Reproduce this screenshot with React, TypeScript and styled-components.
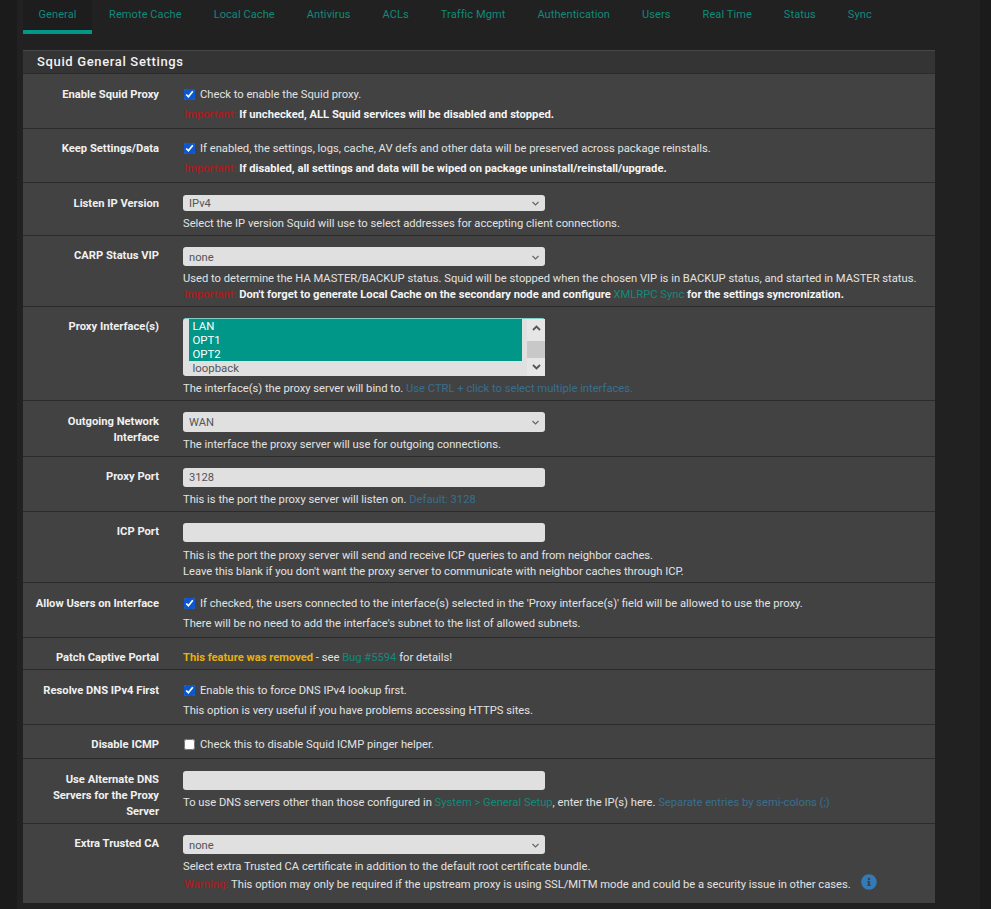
import React from 'react'
import styled, { createGlobalStyle } from 'styled-components'
import { FaInfoCircle } from 'react-icons/fa'

const GlobalStyle = createGlobalStyle`
  html, body {
    margin: 0;
    padding: 0;
    background: #1b1b1b;
    font-family: Roboto, "Liberation Sans", sans-serif;
  }
`

const Page = styled.div`
  width: 963px;
  height: 909px;
  margin-left: 17px;
  padding-left: 6px;
  box-sizing: border-box;
  background: #212121;
  overflow: hidden;
`

const Tabs = styled.ul`
  display: flex;
  gap: 2px;
  height: 34px;
  margin: 0;
  padding: 0;
  list-style: none;
`

const Tab = styled.li<{ $active?: boolean }>`
  height: 30px;
  padding: 0 ${props => props.$active ? '15.5px' : '15px'};
  font-size: 11px;
  line-height: 29px;
  color: #108a7a;
  letter-spacing: 0.09px;
  background: ${props => props.$active ? '#1d1d1d' : 'transparent'};
  border-bottom: 4px solid ${props => props.$active ? '#009688' : 'transparent'};
`

const Panel = styled.section`
  width: 912px;
  margin-top: 16px;
  background: #424242;
`

const Heading = styled.h2`
  margin: 0;
  height: 22px;
  padding-left: 14px;
  font-size: 13px;
  font-weight: 500;
  line-height: 22px;
  letter-spacing: 0.65px;
  color: #f2f2f2;
  background: #343434;
  border-top: 1px solid #484848;
`

const Row = styled.div<{ $pt: number, $pb: number }>`
  display: grid;
  grid-template-columns: 136px 1fr;
  column-gap: 24px;
  padding: ${props => props.$pt}px 0 ${props => props.$pb}px;
  border-top: 1px solid #2b2b2b;
`

const Label = styled.div<{ $offset?: number }>`
  margin-top: ${props => props.$offset ?? 1}px;
  padding-left: 9px;
  font-size: 11.2px;
  font-weight: 700;
  line-height: 16px;
  text-align: right;
  color: #f0f0f0;
`

const Content = styled.div`
  min-width: 0;
`

const Line = styled.div<{ $height?: number, $mt?: number }>`
  display: flex;
  align-items: center;
  height: ${props => props.$height || 16}px;
  margin-top: ${props => props.$mt || 0}px;
  font-size: 11.2px;
  white-space: pre;
  color: #e2e2e2;
`

const Check = styled.input.attrs({ type: 'checkbox', readOnly: true })`
  width: 11px;
  height: 11px;
  margin: 0 5px 0 1px;
  accent-color: #0b57d0;
`

const Strong = styled.strong`
  font-weight: 700;
  color: #f4f4f4;
`

const Danger = styled.span`
  color: #a81e1e;
  font-weight: 500;
  margin-left: 1px;
`

const Notice = styled.strong`
  font-weight: 700;
  color: #e8b00f;
`

const Link = styled.a`
  color: #128a79;
`

const Hint = styled.span`
  color: #386f90;
`

const SelectWrap = styled.div`
  position: relative;
  width: 362px;
`

const Select = styled.select<{ $height: number }>`
  display: block;
  width: 100%;
  height: ${props => props.$height}px;
  padding: 1px 6px 0;
  box-sizing: border-box;
  border: 0;
  border-radius: 3px;
  appearance: none;
  font-family: inherit;
  font-size: 11.2px;
  color: #555;
  background: #e0e0e0;
`

const Chevron = styled.svg`
  position: absolute;
  top: 50%;
  right: 6px;
  width: 7px;
  height: 5px;
  margin-top: -2px;
  fill: none;
  stroke: #666;
  stroke-width: 1.2;
  pointer-events: none;
`

const ListBox = styled.div`
  display: flex;
  width: 362px;
  height: 58px;
  box-sizing: border-box;
  padding-left: 6px;
  border-top: 1px solid #7fcfc5;
  border-radius: 3px;
  background: #e0e0e0;
`

const Options = styled.div`
  width: 333px;
  margin-right: 5px;
`

const Option = styled.div<{ $selected?: boolean }>`
  height: 14px;
  padding-left: 3.5px;
  font-size: 11.4px;
  line-height: 14px;
  color: ${props => props.$selected ? '#fff' : '#555'};
  background: ${props => props.$selected ? '#009688' : 'transparent'};
`

const Scrollbar = styled.div`
  display: flex;
  flex-direction: column;
  width: 18px;
`

const ScrollButton = styled.div<{ $height: number, $pb?: number }>`
  display: flex;
  align-items: center;
  justify-content: center;
  box-sizing: border-box;
  height: ${props => props.$height}px;
  padding-bottom: ${props => props.$pb || 0}px;
  background: #e6e6e6;
`

const ScrollThumb = styled.div`
  flex: 1;
  background: #c8c8c8;
`

const ScrollArrow = styled.svg`
  width: 9px;
  height: 6px;
  fill: none;
  stroke: #555;
  stroke-width: 1.8;
`

const TextInput = styled.input.attrs({ type: 'text', readOnly: true })`
  display: block;
  width: 362px;
  height: 19px;
  padding: 0 6px;
  box-sizing: border-box;
  border: 0;
  border-radius: 3px;
  outline: 0;
  font-family: inherit;
  font-size: 11.2px;
  color: #555;
  background: #e0e0e0;
`

const InfoButton = styled.span`
  display: inline-flex;
  margin: 0 0 4px 10px;
  color: #337ab7;
  font-size: 16px;
`

const tabs = ['General', 'Remote Cache', 'Local Cache', 'Antivirus', 'ACLs', 'Traffic Mgmt', 'Authentication', 'Users', 'Real Time', 'Status', 'Sync']

const Dropdown = ({ value, height }: { value: string, height: number }) => (
  <SelectWrap>
    <Select $height={height} defaultValue={value}><option>{value}</option></Select>
    <Chevron viewBox="0 0 7 5"><path d="M0.5 1 L3.5 4 L6.5 1" /></Chevron>
  </SelectWrap>
)

export default function App() {
  return (
    <Page>
      <GlobalStyle />
      <Tabs>
        {tabs.map((name, i) => <Tab key={name} $active={i === 0}>{name}</Tab>)}
      </Tabs>
      <Panel>
        <Heading>Squid General Settings</Heading>

        <Row $pt={10} $pb={4}>
          <Label $offset={3}>Enable Squid Proxy</Label>
          <Content>
            <Line $height={20}><Check defaultChecked />Check to enable the Squid proxy.</Line>
            <Line $height={20}><Danger>Important: </Danger><Strong>If unchecked, ALL Squid services will be disabled and stopped.</Strong></Line>
          </Content>
        </Row>

        <Row $pt={9} $pb={4}>
          <Label $offset={3}>Keep Settings/Data</Label>
          <Content>
            <Line $height={20}><Check defaultChecked />If enabled, the settings, logs, cache, AV defs and other data will be preserved across package reinstalls.</Line>
            <Line $height={20}><Danger>Important: </Danger><Strong>If disabled, all settings and data will be wiped on package uninstall/reinstall/upgrade.</Strong></Line>
          </Content>
        </Row>

        <Row $pt={12} $pb={2}>
          <Label>Listen IP Version</Label>
          <Content>
            <Dropdown value="IPv4" height={16} />
            <Line $height={20} $mt={2}>Select the IP version Squid will use to select addresses for accepting client connections.</Line>
          </Content>
        </Row>

        <Row $pt={11} $pb={4}>
          <Label>CARP Status VIP</Label>
          <Content>
            <Dropdown value="none" height={19} />
            <Line $mt={4}>Used to determine the HA MASTER/BACKUP status. Squid will be stopped when the chosen VIP is in BACKUP status, and started in MASTER status.</Line>
            <Line><Danger>Important: </Danger><Strong>Don't forget to generate Local Cache on the secondary node and configure </Strong><Link>XMLRPC Sync</Link><Strong> for the settings syncronization.</Strong></Line>
          </Content>
        </Row>

        <Row $pt={11} $pb={4}>
          <Label>Proxy Interface(s)</Label>
          <Content>
            <ListBox>
              <Options>
                <Option $selected>LAN</Option>
                <Option $selected>OPT1</Option>
                <Option $selected>OPT2</Option>
                <Option>loopback</Option>
              </Options>
              <Scrollbar>
                <ScrollButton $height={22} $pb={5}><ScrollArrow viewBox="0 0 9 6"><path d="M1 5 L4.5 1.5 L8 5" /></ScrollArrow></ScrollButton>
                <ScrollThumb />
                <ScrollButton $height={18}><ScrollArrow viewBox="0 0 9 6"><path d="M1 1 L4.5 4.5 L8 1" /></ScrollArrow></ScrollButton>
              </Scrollbar>
            </ListBox>
            <Line $mt={4}>The interface(s) the proxy server will bind to. <Hint>Use CTRL + click to select multiple interfaces.</Hint></Line>
          </Content>
        </Row>

        <Row $pt={11} $pb={4}>
          <Label $offset={2}>Outgoing Network Interface</Label>
          <Content>
            <Dropdown value="WAN" height={20} />
            <Line $mt={4}>The interface the proxy server will use for outgoing connections.</Line>
          </Content>
        </Row>

        <Row $pt={11} $pb={4}>
          <Label>Proxy Port</Label>
          <Content>
            <TextInput defaultValue="3128" />
            <Line $mt={4}>This is the port the proxy server will listen on. <Hint>Default: 3128</Hint></Line>
          </Content>
        </Row>

        <Row $pt={11} $pb={3}>
          <Label>ICP Port</Label>
          <Content>
            <TextInput />
            <Line $mt={5}>This is the port the proxy server will send and receive ICP queries to and from neighbor caches.</Line>
            <Line>Leave this blank if you don't want the proxy server to communicate with neighbor caches through ICP.</Line>
          </Content>
        </Row>

        <Row $pt={10} $pb={4}>
          <Label $offset={3}>Allow Users on Interface</Label>
          <Content>
            <Line $height={20}><Check defaultChecked />If checked, the users connected to the interface(s) selected in the 'Proxy interface(s)' field will be allowed to use the proxy.</Line>
            <Line $height={20}>There will be no need to add the interface's subnet to the list of allowed subnets.</Line>
          </Content>
        </Row>

        <Row $pt={11} $pb={3}>
          <Label>Patch Captive Portal</Label>
          <Content>
            <Line><Notice>This feature was removed</Notice> - see <Link>Bug #5594</Link> for details!</Line>
          </Content>
        </Row>

        <Row $pt={10} $pb={4}>
          <Label $offset={3}>Resolve DNS IPv4 First</Label>
          <Content>
            <Line $height={20}><Check defaultChecked />Enable this to force DNS IPv4 lookup first.</Line>
            <Line $height={20}>This option is very useful if you have problems accessing HTTPS sites.</Line>
          </Content>
        </Row>

        <Row $pt={11} $pb={5}>
          <Label>Disable ICMP</Label>
          <Content>
            <Line><Check />Check this to disable Squid ICMP pinger helper.</Line>
          </Content>
        </Row>

        <Row $pt={12} $pb={3}>
          <Label>Use Alternate DNS Servers for the Proxy Server</Label>
          <Content>
            <TextInput />
            <Line $mt={4}>To use DNS servers other than those configured in <Link>System &gt; General Setup</Link>, enter the IP(s) here. <Hint>Separate entries by semi-colons (;)</Hint></Line>
          </Content>
        </Row>

        <Row $pt={11} $pb={10}>
          <Label>Extra Trusted CA</Label>
          <Content>
            <Dropdown value="none" height={19} />
            <Line $height={18} $mt={3}>Select extra Trusted CA certificate in addition to the default root certificate bundle.</Line>
            <Line $height={18}><Danger>Warning: </Danger>This option may only be required if the upstream proxy is using SSL/MITM mode and could be a security issue in other cases.<InfoButton><FaInfoCircle /></InfoButton></Line>
          </Content>
        </Row>
      </Panel>
    </Page>
  )
}
